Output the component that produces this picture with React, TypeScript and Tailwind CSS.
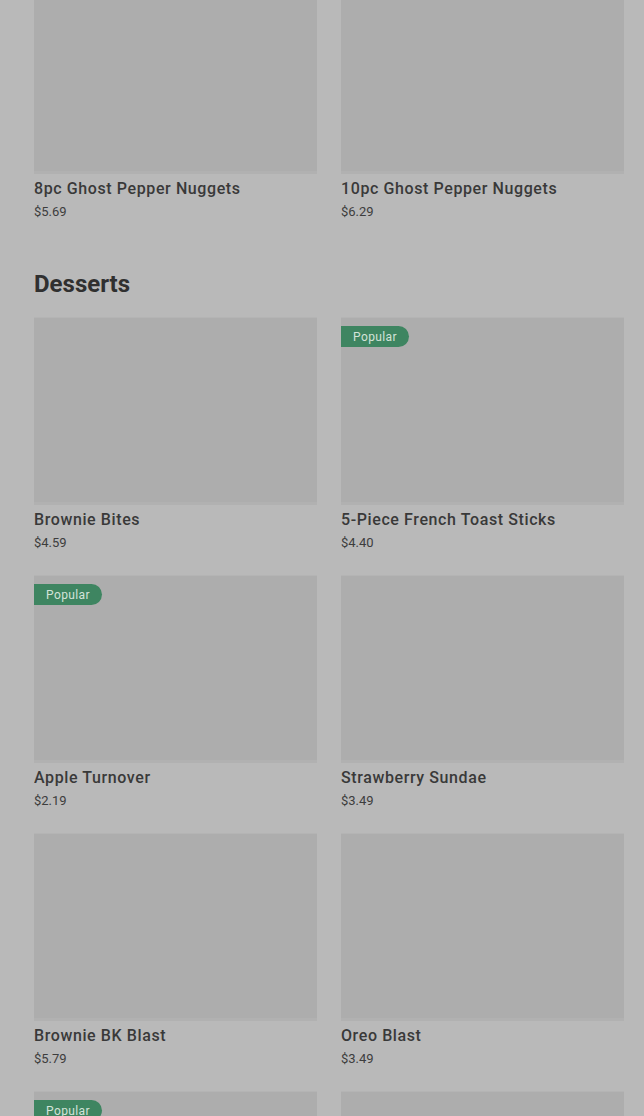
const FONT = { fontFamily: 'Roboto, "Liberation Sans", sans-serif' };

type Item = { name: string; price: string; popular?: boolean };

const SIDES: Item[] = [
  { name: '8pc Ghost Pepper Nuggets', price: '$5.69' },
  { name: '10pc Ghost Pepper Nuggets', price: '$6.29' },
];

const DESSERTS: Item[] = [
  { name: 'Brownie Bites', price: '$4.59' },
  { name: '5-Piece French Toast Sticks', price: '$4.40', popular: true },
  { name: 'Apple Turnover', price: '$2.19', popular: true },
  { name: 'Strawberry Sundae', price: '$3.49' },
  { name: 'Brownie BK Blast', price: '$5.79' },
  { name: 'Oreo Blast', price: '$3.49' },
  { name: 'Oreo Cookies', price: '$1.99', popular: true },
  { name: 'Chocolate Chip Cookies', price: '$1.99' },
];

function MenuCard({ item }: { item: Item }) {
  return (
    <div className="flex flex-col">
      <div className="relative h-[188px] bg-[#adadad] border-t border-[#b4b4b4] border-b-[3px] border-b-[#b1b1b1]">
        {item.popular && (
          <span className="absolute left-0 top-[8px] h-[21px] px-[12px] flex items-center rounded-l-[2px] rounded-r-full bg-[#3e8561] text-[12px] tracking-[0.4px] text-[#d3e3d9]">
            Popular
          </span>
        )}
      </div>
      <div className="mt-[5px] text-[16px] leading-[20px] font-medium tracking-[0.6px] text-[#393939] truncate">
        {item.name}
      </div>
      <div className="mt-[4px] text-[13px] leading-[18px] text-[#3d3d3d]">{item.price}</div>
    </div>
  );
}

function Grid({ items }: { items: Item[] }) {
  return (
    <div className="grid grid-cols-2 gap-x-[24px] gap-y-[23px]">
      {items.map((it) => (
        <MenuCard key={it.name} item={it} />
      ))}
    </div>
  );
}

export default function App() {
  return (
    <div className="h-[1116px] overflow-hidden bg-[#b9b9b9]" style={FONT}>
      <div className="mt-[-14px] pl-[34px] pr-[20px]">
        <Grid items={SIDES} />
        <h2 className="mt-[47px] mb-[17px] text-[24px] leading-[32px] font-bold text-[#303030]">Desserts</h2>
        <Grid items={DESSERTS} />
      </div>
    </div>
  );
}
